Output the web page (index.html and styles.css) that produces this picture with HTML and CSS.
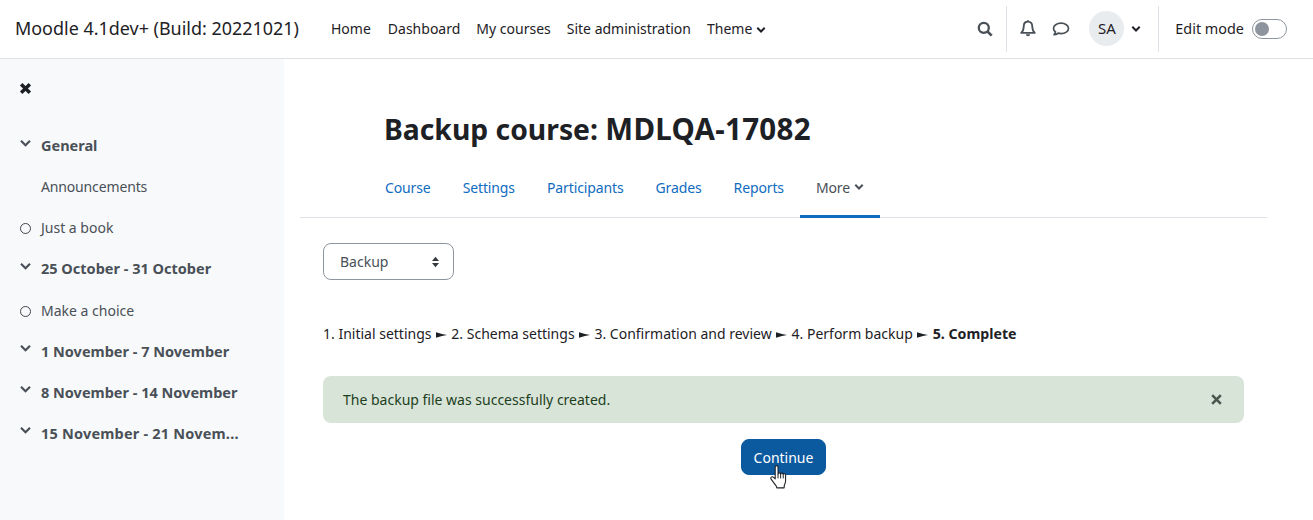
FILE: index.html
```html
<!DOCTYPE html>
<html lang="en">
<head>
<meta charset="utf-8">
<title>Backup course</title>
<link rel="stylesheet" href="styles.css">
</head>
<body>
<header class="navbar">
  <a class="brand">Moodle 4.1dev+ (Build: 20221021)</a>
  <nav class="primary">
    <a>Home</a><a class="dash">Dashboard</a><a>My courses</a><a>Site administration</a>
    <a class="theme">Theme <svg class="chev-s" viewBox="0 0 10 8"><path d="M1.300 1.800 5 5.500l3.700-3.700" fill="none" stroke="currentColor" stroke-width="2"/></svg></a>
  </nav>
  <div class="tools">
    <svg class="ic search" viewBox="0 0 16 16"><circle cx="6.800" cy="6.800" r="5" fill="none" stroke="#495057" stroke-width="2.300"/><path d="m10.500 10.500 4.200 4.200" stroke="#495057" stroke-width="2.600"/></svg>
    <span class="sep s1"></span>
    <svg class="ic bell" viewBox="0 0 15 16"><path d="M7.500 1.500C4.900 1.500 3.500 3.500 3.500 5.800c0 3.200-.8 4.800-2.400 6.300h12.800c-1.600-1.500-2.400-3.100-2.400-6.300 0-2.300-1.400-4.300-4-4.300Z" fill="none" stroke="#495057" stroke-width="1.700" stroke-linejoin="round"/><path d="M5.500 13.400h4a2 2 0 0 1-4 0ZM6.700.3h1.600v1.500H6.700Z" fill="#495057"/></svg>
    <svg class="ic msg" viewBox="0 0 18 16"><path d="M9 2.200c-4.200 0-7.500 2.300-7.500 5.200 0 1.400.8 2.600 2 3.500-.2 1-.7 1.900-1.500 2.800 1.600-.1 3-.7 4.100-1.500.9.2 1.900.4 2.900.4 4.200 0 7.500-2.300 7.500-5.200S13.200 2.200 9 2.200Z" fill="none" stroke="#495057" stroke-width="1.700" stroke-linejoin="round"/></svg>
    <span class="avatar">SA</span>
    <svg class="chev-s user" viewBox="0 0 10 8"><path d="M1.300 1.800 5 5.500l3.700-3.700" fill="none" stroke="#1d2125" stroke-width="2"/></svg>
    <span class="sep s2"></span>
    <span class="edit">Edit mode</span>
    <span class="toggle"><span class="knob"></span></span>
  </div>
</header>
<div class="layout">
  <aside class="drawer">
    <svg class="close" viewBox="0 0 12 12"><path d="M2 2l8 8M10 2l-8 8" stroke="#1d2125" stroke-width="3.200"/></svg>
    <ul class="index">
      <li class="sec"><svg class="chev" viewBox="0 0 12 9"><path d="M1.500 1.800 6 6.300l4.500-4.500" fill="none" stroke="currentColor" stroke-width="2.200"/></svg><span>General</span></li>
      <li class="act plain"><span>Announcements</span></li>
      <li class="act"><i class="dot"></i><span>Just a book</span></li>
      <li class="sec"><svg class="chev" viewBox="0 0 12 9"><path d="M1.500 1.800 6 6.300l4.500-4.500" fill="none" stroke="currentColor" stroke-width="2.200"/></svg><span>25 October - 31 October</span></li>
      <li class="act"><i class="dot"></i><span>Make a choice</span></li>
      <li class="sec"><svg class="chev" viewBox="0 0 12 9"><path d="M1.500 1.800 6 6.300l4.500-4.500" fill="none" stroke="currentColor" stroke-width="2.200"/></svg><span>1 November - 7 November</span></li>
      <li class="sec"><svg class="chev" viewBox="0 0 12 9"><path d="M1.500 1.800 6 6.300l4.500-4.500" fill="none" stroke="currentColor" stroke-width="2.200"/></svg><span>8 November - 14 November</span></li>
      <li class="sec last"><svg class="chev" viewBox="0 0 12 9"><path d="M1.500 1.800 6 6.300l4.500-4.500" fill="none" stroke="currentColor" stroke-width="2.200"/></svg><span>15 November - 21 Novem...</span></li>
    </ul>
  </aside>
  <main class="main">
    <h1 class="title">Backup course: <span class="code">MDLQA-17082</span></h1>
    <nav class="tabs">
      <a>Course</a><a>Settings</a><a>Participants</a><a>Grades</a><a>Reports</a>
      <a class="active">More <svg class="chev-s" viewBox="0 0 10 8"><path d="M1.300 1.800 5 5.500l3.700-3.700" fill="none" stroke="currentColor" stroke-width="2"/></svg></a>
    </nav>
    <div class="content">
      <div class="select">Backup<svg class="updown" viewBox="0 0 8 12"><path d="M4 .8 7.500 5H.5ZM4 11.200.5 7h7Z" fill="#343a40"/></svg></div>
      <p class="steps">1. Initial settings <svg class="arrow" viewBox="0 0 11 6"><path d="M0 .3 6 2l5 1-5 1-6 1.700V3.600h-.1V2.400H0Z" fill="#1d2125"/></svg> 2. Schema settings <svg class="arrow" viewBox="0 0 11 6"><path d="M0 .3 6 2l5 1-5 1-6 1.700V3.600h-.1V2.400H0Z" fill="#1d2125"/></svg> 3. Confirmation and review <svg class="arrow" viewBox="0 0 11 6"><path d="M0 .3 6 2l5 1-5 1-6 1.700V3.600h-.1V2.400H0Z" fill="#1d2125"/></svg> 4. Perform backup <svg class="arrow" viewBox="0 0 11 6"><path d="M0 .3 6 2l5 1-5 1-6 1.700V3.600h-.1V2.400H0Z" fill="#1d2125"/></svg> <b>5. Complete</b></p>
      <div class="alert"><span>The backup file was successfully created.</span><svg class="alert-x" viewBox="0 0 12 12"><path d="M2 2l8 8M10 2l-8 8" stroke="#4a554e" stroke-width="2.400"/></svg></div>
      <div class="actions">
        <button class="btn">Continue
          <svg class="cursor" viewBox="0 0 18 24"><path d="M5.500 2.800c0-1.700 2.600-1.700 2.600 0v6.500c.2-1.500 2.300-1.500 2.400 0 .2-1.300 2.300-1.200 2.400.3.300-1 2.200-.8 2.200.8v5.100c0 1.800-.5 2.800-1.200 4.200l-.2 2.300H7l-.5-1.600L1.700 14c-1-1.500.8-3 2.200-1.800l1.600 1.500Z" fill="#fff" stroke="#1d2125" stroke-width="1" stroke-linejoin="round"/><path d="M8.100 9.300v4M10.500 9.300v4M12.900 9.600v3.700" stroke="#1d2125" stroke-width=".9" fill="none"/></svg>
        </button>
      </div>
    </div>
  </main>
</div>
</body>
</html>
```
FILE: styles.css
```css
* { box-sizing: border-box; }
html, body { margin: 0; height: 100%; }
body {
  font-family: "Noto Sans", "Open Sans", sans-serif;
  font-size: 14px;
  line-height: 21px;
  color: #1d2125;
  background: #fff;
  overflow: hidden;
}
.navbar {
  height: 59px;
  border-bottom: 1px solid #dee2e6;
  padding-bottom: 1px;
  display: flex;
  align-items: center;
  padding-left: 15px;
}
.brand { font-size: 17.950px; white-space: nowrap; width: 300px; }
.primary { display: flex; gap: 16px; margin-left: 16px; align-items: center; }
.primary a { white-space: nowrap; }
.dash { margin-left: 1px; }
.chev-s { width: 10px; height: 8px; display: inline-block; }
.tools { margin-left: auto; display: flex; align-items: center; height: 46px; padding-right: 26px; }
.ic { display: block; }
.search { width: 16px; height: 16px; }
.sep { width: 1px; height: 46px; background: #dee2e6; }
.s1 { margin: 0 13px 0 13px; }
.bell { width: 16px; height: 17px; }
.msg { width: 18px; height: 16px; margin-left: 16px; }
.avatar {
  width: 35px; height: 35px; border-radius: 50%;
  background: #e9ecef; display: flex; align-items: center; justify-content: center;
  margin-left: 19px; font-size: 15px;
}
.user { margin-left: 7px; }
.s2 { margin: 0 16px 0 17px; }
.edit { white-space: nowrap; font-size: 14.400px; }
.toggle {
  width: 35px; height: 20px; margin-left: 8px;
  border: 1px solid #8f959e; border-radius: 10px; background: #fff; display: block; padding: 2px;
}
.knob { display: block; width: 14px; height: 14px; border-radius: 50%; background: #8f959e; }
.layout { display: flex; height: 461px; }
.drawer { width: 284px; flex: none; background: #f8f9fa; padding: 23px 19px 0; }
.close { width: 13px; height: 13px; display: block; }
.index { list-style: none; margin: 40px 0 0; padding: 0; color: #495057; }
.index li { display: flex; align-items: center; height: 21px; margin-bottom: 20.150px; white-space: nowrap; }
.index li span { margin-left: 9px; }
.sec { font-weight: 700; font-size: 14.500px; }
.last { letter-spacing: .2px; }
.chev { width: 13px; height: 9px; margin-top: -5px; }
.dot { width: 11px; height: 11px; border: 1.400px solid #3f464c; border-radius: 50%; display: block; margin: 2px 1px 0 1px; }
.plain span { margin-left: 22px !important; letter-spacing: -.15px; }
.main { flex: 1; padding: 0 46px 0 16px; min-width: 0; }
.title { font-size: 28.300px; line-height: 34px; font-weight: 700; margin: 53px 0 0 84px; white-space: nowrap; }
.code { font-size: 29.500px; letter-spacing: .3px; }
.tabs {
  display: flex; margin-top: 21px; padding-left: 69px; height: 51px;
  border-bottom: 1px solid #dee2e6; color: #0f6cbf; letter-spacing: -.12px;
}
.tabs a { padding: 0 16px 11px; height: 51px; display: flex; align-items: center; gap: 4px; white-space: nowrap; }
.tabs .active { color: #495057; border-bottom: 3px solid #0f6cbf; padding-bottom: 8px; }
.content { padding: 25px 23px 0; }
.select {
  width: 131px; height: 37px; border: 1px solid #8f959e; border-radius: 8px;
  display: flex; align-items: center; justify-content: space-between; padding: 0 13px 0 16px; color: #495057;
}
.updown { width: 9px; height: 12px; }
.steps { margin: 43px 0 0; white-space: nowrap; line-height: 22px; }
.steps b { font-size: 14.200px; }
.arrow { width: 11px; height: 6px; margin: 0 .8px 1px; }
.alert {
  margin-top: 31px; height: 47px; background: #d9e4d9; border-radius: 8px; color: #1c3f1c;
  display: flex; align-items: center; justify-content: space-between; padding: 0 21px 0 20px;
}
.alert-x { width: 13px; height: 13px; }
.actions { display: flex; justify-content: center; margin-top: 16px; }
.btn {
  position: relative; width: 85px; height: 36px; background: #0b5aa0; color: #fff;
  border: 1px solid #0b5aa0; border-radius: 8px; font: inherit; padding: 0;
}
.cursor { position: absolute; left: 27px; top: 24px; width: 20px; height: 26px; }
```
